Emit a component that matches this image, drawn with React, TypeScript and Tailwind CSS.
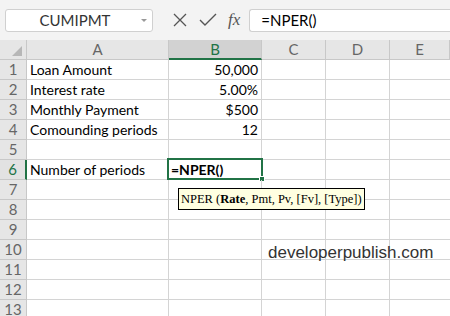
import React from "react";

const cols = ["A", "B", "C", "D", "E"];
const rows: [string, string][] = [
  ["Loan Amount", "50,000"],
  ["Interest rate", "5.00%"],
  ["Monthly Payment", "$500"],
  ["Comounding periods", "12"],
  ["", ""],
  ["Number of periods", ""],
  ["", ""],
  ["", ""],
  ["", ""],
  ["", ""],
  ["", ""],
  ["", ""],
  ["", ""],
];

export default function App() {
  return (
    <div
      className="relative w-[450px] h-[316px] overflow-hidden bg-white"
      style={{ fontFamily: "Lato, 'Open Sans', sans-serif" }}
    >
      {/* formula bar */}
      <div className="flex items-center h-[40px] bg-[#f3f3f3]">
        <div className="ml-[5px] w-[148px] h-[23px] bg-white border border-[#d0d0d0] rounded-[3px] flex items-center relative">
          <span className="flex-1 text-center text-[15px] text-[#333] pr-[8px]">CUMIPMT</span>
          <svg className="absolute right-[5px] top-[9px]" width="6" height="4" viewBox="0 0 6 4">
            <path d="M0 0 L6 0 L3 3 Z" fill="#999" />
          </svg>
        </div>
        <div className="flex items-center ml-[19px] gap-[11px]">
          <svg width="16" height="16" viewBox="0 0 16 16">
            <path d="M2 2 L14 14 M14 2 L2 14" stroke="#555" strokeWidth="1.3" fill="none" />
          </svg>
          <svg width="18" height="16" viewBox="0 0 18 16">
            <path d="M1 8 L6 13 L17 2" stroke="#555" strokeWidth="1.4" fill="none" />
          </svg>
          <span
            className="text-[17px] italic text-[#555] leading-none -mt-[2px]"
            style={{ fontFamily: "'Liberation Serif', serif" }}
          >
            fx
          </span>
        </div>
        <div className="ml-[9px] flex-1 h-[23px] bg-white border border-[#d0d0d0] rounded-l-[3px] border-r-0 flex items-center pl-[11px] text-[15px] text-black">
          =NPER()
        </div>
      </div>

      {/* grid */}
      <div className="grid grid-cols-[27px_142px_93px_64px_64px_1fr] auto-rows-[20px]">
        <div className="relative bg-[#e6e6e6] border-r border-b border-[#c8c8c8]">
          <svg className="absolute right-[4px] bottom-[3px]" width="10" height="10" viewBox="0 0 10 10">
            <path d="M10 0 L10 10 L0 10 Z" fill="#b7b7b7" />
          </svg>
        </div>
        {cols.map((c) =>
          c === "B" ? (
            <div
              key={c}
              className="bg-[#d2d2d2] border-r border-[#c8c8c8] border-b-2 border-b-[#217346] flex items-center justify-center text-[15px] text-[#217346]"
            >
              {c}
            </div>
          ) : (
            <div
              key={c}
              className="bg-[#e6e6e6] border-r border-b border-[#c8c8c8] flex items-center justify-center text-[15px] text-[#666]"
            >
              {c}
            </div>
          )
        )}

        {rows.map(([a, b], i) => {
          const n = i + 1;
          const sel = n === 6;
          return (
            <React.Fragment key={n}>
              <div
                className={
                  sel
                    ? "bg-[#e2e2e2] border-b border-[#c8c8c8] border-r-2 border-r-[#217346] flex items-center justify-center text-[15px] text-[#217346]"
                    : "bg-[#e6e6e6] border-r border-b border-[#c8c8c8] flex items-center justify-center text-[15px] text-[#666]"
                }
              >
                {n}
              </div>
              <div className="border-r border-b border-[#d4d4d4] flex items-center pl-[3px] text-[14px] text-black whitespace-nowrap">
                {a}
              </div>
              <div className="relative border-r border-b border-[#d4d4d4] flex items-center justify-end pr-[3px] text-[14px] text-black whitespace-nowrap">
                {b}
                {sel && (
                  <div className="absolute -left-[2px] -top-[2px] w-[96px] h-[22px] border-2 border-[#217346] flex items-center pl-[2px] text-[14px] font-bold text-black">
                    =NPER()
                    <div className="absolute -right-[4px] -bottom-[4px] w-[6px] h-[6px] bg-[#217346] border border-white" />
                  </div>
                )}
              </div>
              <div className="border-r border-b border-[#d4d4d4]" />
              <div className="border-r border-b border-[#d4d4d4]" />
              <div className="border-b border-[#d4d4d4]" />
            </React.Fragment>
          );
        })}
      </div>

      {/* tooltip */}
      <div
        className="absolute left-[178px] top-[188px] h-[22px] px-[2px] bg-[#ffffe1] border border-black flex items-center text-[12.5px] text-black whitespace-nowrap"
        style={{ fontFamily: "'Liberation Serif', serif" }}
      >
        NPER (<b>Rate</b>, Pmt, Pv, [Fv], [Type])
      </div>

      {/* watermark */}
      <div
        className="absolute left-[268px] top-[240px] text-[17px] text-[#333]"
        style={{ fontFamily: "'Liberation Sans', Arial, sans-serif" }}
      >
        developerpublish.com
      </div>
    </div>
  );
}
